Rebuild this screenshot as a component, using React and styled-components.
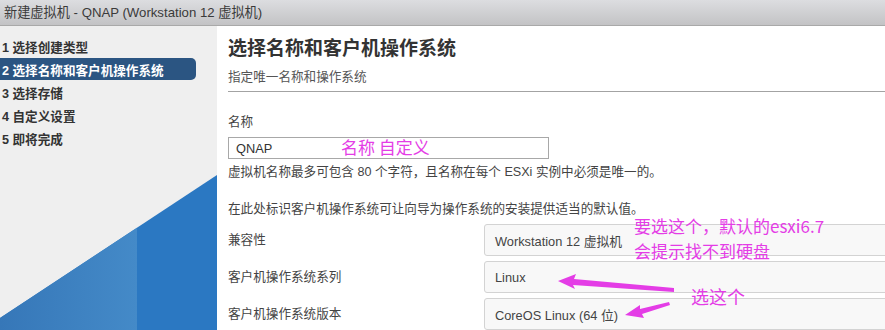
import React from "react";
import styled, { createGlobalStyle } from "styled-components";

const Global = createGlobalStyle`
  html, body { margin: 0; padding: 0; background: #fff; }
  body { width: 885px; height: 330px; overflow: hidden; font-family: "Liberation Sans", "Noto Sans CJK SC", sans-serif; }
`;

const Frame = styled.div`
  width: 885px;
  height: 330px;
  display: flex;
  flex-direction: column;
  overflow: hidden;
  color: #333;
  font-size: 12.6px;
`;

const TitleBar = styled.div`
  height: 26px;
  flex: none;
  box-sizing: border-box;
  border-bottom: 1px solid #a9a9a9;
  background: linear-gradient(#dcdde0, #c3c3c5);
  display: flex;
  align-items: center;
  padding: 0 0 2px 4px;
  font-size: 13.2px;
  color: #3a3a3a;
`;

const Body = styled.div`
  flex: 1;
  display: flex;
  min-height: 0;
`;

const Sidebar = styled.div`
  width: 217px;
  flex: none;
  background: #efefef;
  position: relative;
  overflow: hidden;
`;

const StepList = styled.ul`
  list-style: none;
  margin: 0;
  padding: 9px 0 0 0;
  display: flex;
  flex-direction: column;
  gap: 1px;
  position: relative;
  z-index: 1;
`;

const Step = styled.li`
  height: 22px;
  width: 196px;
  box-sizing: border-box;
  display: flex;
  align-items: center;
  padding-left: 2px;
  font-size: 12.6px;
  font-weight: 700;
  color: ${(p) => (p.$active ? "#fff" : "#333")};
  background: ${(p) => (p.$active ? "#2b5582" : "transparent")};
  border-radius: 0 5px 5px 0;
`;

const Deco = styled.svg`
  position: absolute;
  left: 0;
  bottom: 0;
  width: 217px;
  height: 160px;
`;

const Main = styled.div`
  flex: 1;
  background: #fff;
  position: relative;
  overflow: hidden;
  padding: 11px 0 0 11px;
  display: flex;
  flex-direction: column;
`;

const Heading = styled.h1`
  margin: 0;
  font-size: 19px;
  line-height: 24px;
  font-weight: 700;
  color: #333;
`;

const Subtitle = styled.div`
  margin-top: 7px;
  line-height: 18px;
  color: #555;
  font-size: 12.6px;
`;

const Divider = styled.hr`
  margin: 5px 0 0 0;
  border: 0;
  border-top: 1px solid #a3a3a3;
  height: 0;
`;

const FieldLabel = styled.div`
  margin-top: ${(p) => p.$mt || 0}px;
  line-height: 18px;
  color: #444;
`;

const TextInput = styled.div`
  margin-top: 6px;
  width: 321px;
  height: 24px;
  box-sizing: border-box;
  border: 1px solid #a8a8a8;
  display: flex;
  align-items: center;
  padding-left: 7px;
  color: #333;
  font-size: 12.8px;
`;

const Help = styled.div`
  margin-top: ${(p) => p.$mt}px;
  line-height: 18px;
  color: #444;
`;

const Rows = styled.div`
  margin-top: 6px;
  display: flex;
  flex-direction: column;
  gap: 5px;
`;

const Row = styled.div`
  display: grid;
  grid-template-columns: 256px 420px;
  align-items: center;
`;

const SelectBox = styled.div`
  height: 32px;
  box-sizing: border-box;
  border: 1px solid #d3d3d3;
  border-radius: 3px;
  background: #f8f8f8;
  display: flex;
  align-items: center;
  padding-left: 10px;
  color: #444;
  font-size: 12.8px;
`;

const Note = styled.div`
  position: absolute;
  left: ${(p) => p.$x}px;
  top: ${(p) => p.$y}px;
  color: #e43de6;
  font-family: "Noto Sans CJK SC", sans-serif;
  font-size: ${(p) => p.$size || 17}px;
  line-height: 24px;
  white-space: nowrap;
  z-index: 2;
`;

const Arrows = styled.svg`
  position: absolute;
  left: 0;
  top: 0;
  width: 668px;
  height: 303px;
  pointer-events: none;
  z-index: 2;
`;

const steps = [
  "1 选择创建类型",
  "2 选择名称和客户机操作系统",
  "3 选择存储",
  "4 自定义设置",
  "5 即将完成",
];

const rows = [
  ["兼容性", "Workstation 12 虚拟机"],
  ["客户机操作系统系列", "Linux"],
  ["客户机操作系统版本", "CoreOS Linux (64 位)"],
];

export default function App() {
  return (
    <Frame>
      <Global />
      <TitleBar>新建虚拟机 - QNAP (Workstation 12 虚拟机)</TitleBar>
      <Body>
        <Sidebar>
          <StepList>
            {steps.map((s, i) => (
              <Step key={s} $active={i === 1}>
                {s}
              </Step>
            ))}
          </StepList>
          <Deco viewBox="0 0 217 160" preserveAspectRatio="none">
            <defs>
              <linearGradient id="lg" x1="0" y1="0" x2="1" y2="0">
                <stop offset="0" stopColor="#3677b8" />
                <stop offset="1" stopColor="#448ac8" />
              </linearGradient>
            </defs>
            <polygon points="0,148 217,5 217,160 0,160" fill="#2b78c2" />
            <polygon points="0,148 137,57.7 137,160 0,160" fill="url(#lg)" />
          </Deco>
        </Sidebar>
        <Main>
          <Heading>选择名称和客户机操作系统</Heading>
          <Subtitle>指定唯一名称和操作系统</Subtitle>
          <Divider />
          <FieldLabel $mt={21}>名称</FieldLabel>
          <TextInput>QNAP</TextInput>
          <Help $mt={4}>
            虚拟机名称最多可包含 80 个字符，且名称在每个 ESXi 实例中必须是唯一的。
          </Help>
          <Help $mt={19}>在此处标识客户机操作系统可让向导为操作系统的安装提供适当的默认值。</Help>
          <Rows>
            {rows.map(([l, v]) => (
              <Row key={l}>
                <FieldLabel>{l}</FieldLabel>
                <SelectBox>{v}</SelectBox>
              </Row>
            ))}
          </Rows>

          <Note $x={124} $y={109}>名称 自定义</Note>
          <Note $x={417} $y={188}>要选这个，默认的esxi6.7</Note>
          <Note $x={417} $y={213}>会提示找不到硬盘</Note>
          <Note $x={474} $y={258} $size={18}>选这个</Note>
          <Arrows viewBox="0 0 668 303">
            <polygon
              points="341,255 359,248 357,253 457,262 457,266 356,259 358,263"
              fill="#e43de6"
            />
            <polygon
              points="408,289 423,279 423,283 452,276 453,279 425,288 427,292"
              fill="#e43de6"
            />
          </Arrows>
        </Main>
      </Body>
    </Frame>
  );
}
